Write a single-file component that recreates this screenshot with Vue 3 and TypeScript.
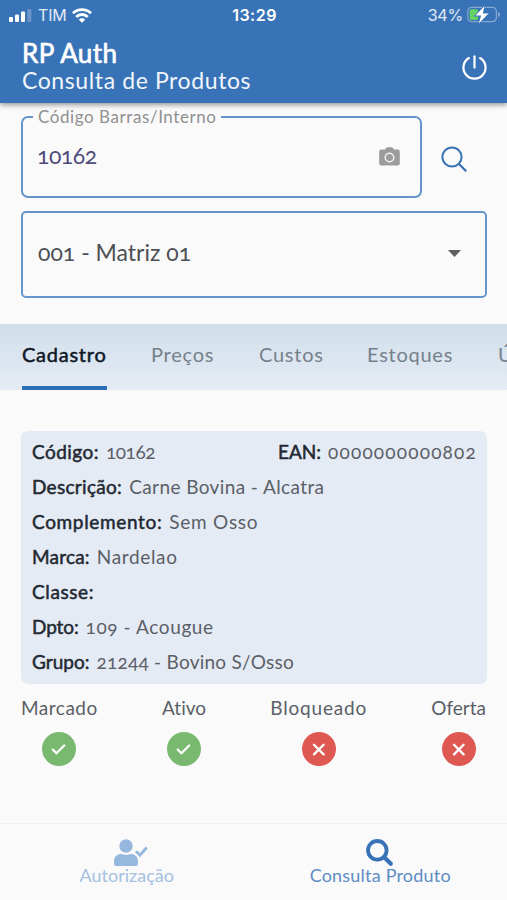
<script setup lang="ts">
interface Field {
  label: string
  value: string
  key: string
}

interface Flag {
  label: string
  key: string
  on: boolean
}

const tabs: { label: string; key: string }[] = [
  { label: 'Cadastro', key: 'cadastro' },
  { label: 'Preços', key: 'precos' },
  { label: 'Custos', key: 'custos' },
  { label: 'Estoques', key: 'estoques' },
  { label: 'Ú', key: 'ultimas' },
]
const activeTab = 'cadastro'

const fields: Field[] = [
  { label: 'Descrição:', value: 'Carne Bovina - Alcatra', key: 'descricao' },
  { label: 'Complemento:', value: 'Sem Osso', key: 'complemento' },
  { label: 'Marca:', value: 'Nardelao', key: 'marca' },
  { label: 'Classe:', value: '', key: 'classe' },
  { label: 'Dpto:', value: '109 - Acougue', key: 'dpto' },
  { label: 'Grupo:', value: '21244 - Bovino S/Osso', key: 'grupo' },
]

const flags: Flag[] = [
  { label: 'Marcado', key: 'marcado', on: true },
  { label: 'Ativo', key: 'ativo', on: true },
  { label: 'Bloqueado', key: 'bloqueado', on: false },
  { label: 'Oferta', key: 'oferta', on: false },
]
</script>

<template>
  <div class="screen">
    <header class="header">
      <div class="status">
        <div class="status-left">
          <svg class="signal" width="23" height="13" viewBox="0 0 23 13">
            <rect x="0" y="8" width="4" height="5" rx="1" fill="#fff" />
            <rect x="6" y="5.5" width="4" height="7.5" rx="1" fill="#fff" />
            <rect x="12" y="2.5" width="4" height="10.5" rx="1" fill="#fff" />
            <rect x="18.3" y="0" width="4" height="13" rx="1" fill="#fff" opacity=".25" />
          </svg>
          <span class="carrier">TIM</span>
          <svg width="20" height="15" viewBox="0 0 20 15" fill="none" stroke="#fff">
            <path d="M1 5.300a12.800 12.800 0 0 1 18 0" stroke-width="2.900" />
            <path d="M4.200 8.900a8.200 8.200 0 0 1 11.600 0" stroke-width="2.800" />
            <path d="M10 14.800 6.800 11.700a4.500 4.500 0 0 1 6.400 0z" fill="#fff" stroke="none" />
          </svg>
        </div>
        <span class="clock">13:29</span>
        <div class="status-right">
          <span class="percent">34%</span>
          <svg width="33" height="18" viewBox="0 0 33 18">
            <rect x=".8" y="1.300" width="28.600" height="14.400" rx="4" fill="none" stroke="#fff" stroke-opacity=".38" stroke-width="1.200" />
            <path d="M31 6v5.200c1.300-.5 2-1.400 2-2.600S32.300 6.500 31 6z" fill="#fff" opacity=".4" />
            <rect x="2.700" y="3.200" width="8.500" height="10.800" rx="2" fill="#65d464" />
            <path d="M17.500 0 8.500 9.600h5.600L11.800 17.500 21.500 7.400h-5.700z" fill="#fff" stroke="#3973b7" stroke-width="1.800" paint-order="stroke" />
          </svg>
        </div>
      </div>
      <div class="titlebar">
        <div class="titles">
          <h1>RP Auth</h1>
          <h2>Consulta de Produtos</h2>
        </div>
        <svg class="power" width="25" height="25" viewBox="0 0 26 26" fill="none" stroke="#fff" stroke-width="2.300" stroke-linecap="round">
          <path d="M7.200 3.200a11.500 11.500 0 1 0 11.600 0" />
          <path d="M13 1.300v11.800" />
        </svg>
      </div>
    </header>

    <section class="search">
      <div class="search-row">
        <fieldset class="code-field">
          <legend><span>Código Barras/Interno</span></legend>
          <div class="field-body">
            <span class="code">10162</span>
            <svg width="21" height="19" viewBox="0 0 21 19">
              <path d="M2.200 2.600h3.600L7.300.8Q7.700.3 8.400.3h4.200q.7 0 1.100.5l1.500 1.800h3.600q2 0 2 2v11.800q0 2-2 2H2.200q-2 0-2-2V4.600q0-2 2-2z" fill="#9c9c9c" />
              <circle cx="10.500" cy="10.500" r="4.300" fill="none" stroke="#f2f2f2" stroke-width="1.500" />
            </svg>
          </div>
        </fieldset>
        <svg class="lens" width="27" height="27" viewBox="0 0 27 27" fill="none" stroke="#3973b7" stroke-width="2">
          <circle cx="11" cy="11" r="9.600" />
          <path d="m17.800 17.800 7.400 7.400" stroke-width="2.300" />
        </svg>
      </div>
      <div class="select">
        <span>001 - Matriz 01</span>
        <svg width="13" height="7" viewBox="0 0 13 7"><path d="M0 0h13L6.500 7z" fill="#5f5f5f" /></svg>
      </div>
    </section>

    <nav class="tabs">
      <div v-for="tab in tabs" :key="tab.key" class="tab" :class="[tab.key, { active: tab.key === activeTab }]">
        <span>{{ tab.label }}</span>
      </div>
    </nav>

    <section class="card">
      <div class="row split">
        <div class="pair codigo"><b>Código:</b><span>10162</span></div>
        <div class="pair ean"><b>EAN:</b><span>0000000000802</span></div>
      </div>
      <div v-for="field in fields" :key="field.key" class="row pair" :class="field.key">
        <b>{{ field.label }}</b><span>{{ field.value }}</span>
      </div>
    </section>

    <section class="flags">
      <div v-for="flag in flags" :key="flag.key" class="flag" :class="flag.key">
        <span>{{ flag.label }}</span>
        <svg width="34" height="34" viewBox="0 0 34 34" fill="none" stroke="#fff" stroke-width="2.300" stroke-linecap="round">
          <circle cx="17" cy="17" r="17" stroke="none" :fill="flag.on ? '#78b96f' : '#df5953'" />
          <path v-if="flag.on" d="m10.800 17.600 3.600 3.600 7.800-7.700" />
          <path v-else d="m12 12.800 9.600 9.600m0-9.600L12 22.400" />
        </svg>
      </div>
    </section>

    <footer class="bottom">
      <div class="nav-item auth">
        <svg width="34" height="28" viewBox="0 0 34 28" fill="#96b8de">
          <circle cx="12" cy="7" r="6.700" />
          <path d="M0 24.500v-2.200c0-4.300 3-7.300 7-7.300 1.800 0 3 .9 5 .9s3.200-.9 5-.9c4 0 7 3 7 7.300v2.200q0 2.500-2.500 2.500h-19Q0 27 0 24.500z" />
          <path d="m22 12.200 4 4 6.700-7.700" fill="none" stroke="#96b8de" stroke-width="2.900" />
        </svg>
        <span>Autorização</span>
      </div>
      <div class="nav-item consulta">
        <svg width="28" height="28" viewBox="0 0 28 28" fill="none" stroke="#3973b7">
          <circle cx="11.300" cy="11.300" r="9.300" stroke-width="3.800" />
          <path d="m18.500 18.500 6.300 6.300" stroke-width="4.200" stroke-linecap="round" />
        </svg>
        <span>Consulta Produto</span>
      </div>
    </footer>
  </div>
</template>

<style>
body {
  margin: 0;
  background: #fafafa;
}
</style>

<style scoped>
* {
  box-sizing: border-box;
}

.screen {
  width: 507px;
  height: 900px;
  overflow: hidden;
  display: flex;
  flex-direction: column;
  background: #fafafa;
  color: #5b6067;
  font-family: Lato, "Open Sans", sans-serif;
  font-size: 19px;
  font-variant-numeric: oldstyle-nums;
  font-variant-ligatures: none;
  white-space: nowrap;
}

svg {
  display: block;
  flex: none;
  overflow: visible;
}

.header {
  flex: none;
  height: 103px;
  background: #3973b7;
  color: #fff;
  box-shadow: 0 2px 5px rgba(0, 0, 0, .4);
}

.status {
  height: 30px;
  padding: 0 7px 0 9px;
  display: grid;
  grid-template-columns: 1fr auto 1fr;
  align-items: center;
  font-family: Inter, sans-serif;
  font-variant-numeric: lining-nums;
  font-size: 16px;
}

.status-left,
.status-right {
  display: flex;
  align-items: center;
}

.carrier {
  margin: 0 6px;
  letter-spacing: -.2px;
  color: #e1eaf5;
}

.clock {
  font-weight: 600;
  letter-spacing: .5px;
}

.status-right {
  justify-content: flex-end;
  gap: 4px;
  color: #e1eaf5;
}

.percent {
  letter-spacing: -.2px;
}

.titlebar {
  height: 73px;
  padding: 0 20px 0 22px;
  display: flex;
  justify-content: space-between;
}

.titles {
  padding-top: 9px;
}

h1,
h2 {
  margin: 0;
  font-weight: 400;
  line-height: 28px;
}

h1 {
  font-size: 26px;
  letter-spacing: .4px;
  -webkit-text-stroke: .7px #fff;
}

h2 {
  margin-top: -1px;
  font-size: 23px;
  letter-spacing: .6px;
  color: #f0f5fb;
}

.power {
  margin-top: 25px;
}

.search {
  padding: 4px 20px 0 21px;
}

.search-row {
  display: flex;
  height: 91px;
}

.code-field {
  width: 401px;
  height: 91px;
  margin: 0;
  padding: 0 20px 0 14px;
  border: 2px solid #6595cb;
  border-radius: 7px;
}

.code-field legend {
  margin-left: -4px;
  padding: 0 5px;
  height: 20px;
  line-height: 20px;
  font-size: 17px;
  letter-spacing: .57px;
  color: #909090;
}

.field-body {
  height: 59px;
  display: flex;
  align-items: center;
  justify-content: space-between;
}

.code {
  margin-top: -3px;
  font-size: 23px;
  letter-spacing: -.5px;
  color: #4e4a7a;
}

.lens {
  margin: 39px 0 0 19px;
}

.select {
  margin-top: 13px;
  height: 87px;
  padding: 0 24px 2px 15px;
  border: 2px solid #6595cb;
  border-radius: 5px;
  display: flex;
  align-items: center;
  justify-content: space-between;
  font-size: 23px;
  color: #4c4f53;
}

.select span {
  margin-top: -3px;
}

.tabs {
  flex: none;
  margin-top: 26px;
  height: 66px;
  padding-left: 22px;
  display: flex;
  background: linear-gradient(#d0dfea, #e5ebf4);
  font-size: 20px;
  letter-spacing: .75px;
  color: #76808b;
}

.tab {
  flex: none;
  height: 66px;
  line-height: 61px;
}

.tab.cadastro {
  width: 129px;
  letter-spacing: .75px;
}

.tab.precos,
.tab.custos {
  width: 108px;
}

.tab.estoques {
  width: 131px;
}

.tab.active {
  color: #101827;
  -webkit-text-stroke: .5px #101827;
}

.tab.active span {
  display: block;
  width: 85px;
  height: 66px;
  border-bottom: 4px solid #2d6fb6;
}

.card {
  flex: none;
  margin: 41px 20px 0 21px;
  height: 253px;
  padding: 3px 11px 0;
  border-radius: 7px;
  background: #e5ebf4;
}

.row {
  height: 35px;
  line-height: 35px;
}

.split {
  display: flex;
  justify-content: space-between;
}

.pair b {
  display: inline-block;
  margin-right: 7px;
  font-weight: 400;
  color: #222832;
  -webkit-text-stroke: .5px #222832;
}

.codigo b {
  letter-spacing: .45px;
}

.descricao b {
  letter-spacing: .3px;
}

.codigo span {
  letter-spacing: -.4px;
}

.ean span {
  margin-right: -1px;
  letter-spacing: 1.200px;
}

.descricao span {
  letter-spacing: .4px;
}

.complemento b {
  letter-spacing: .65px;
}

.complemento span {
  letter-spacing: .75px;
}

.marca b {
  letter-spacing: .2px;
}

.marca span {
  letter-spacing: .65px;
}

.classe b {
  letter-spacing: .6px;
}

.dpto b {
  letter-spacing: -.1px;
}

.dpto span {
  letter-spacing: .6px;
}

.grupo span {
  letter-spacing: .25px;
}

.flags {
  flex: none;
  padding: 10px 21px 0;
  height: 139px;
  display: flex;
  justify-content: space-between;
}

.flag {
  display: flex;
  flex-direction: column;
  align-items: center;
  gap: 11px;
  line-height: 27px;
}

.marcado {
  letter-spacing: .5px;
}

.bloqueado {
  letter-spacing: .8px;
}

.bottom {
  flex: none;
  height: 77px;
  border-top: 1px solid #f1f1f1;
  display: grid;
  grid-template-columns: 1fr 1fr;
}

.nav-item {
  display: flex;
  flex-direction: column;
  align-items: center;
  padding-top: 15px;
  line-height: 20px;
  font-size: 18px;
}

.nav-item span {
  margin-top: -2px;
}

.auth {
  color: #a5c1df;
}

.auth svg {
  margin-left: 8px;
}

.consulta {
  letter-spacing: .2px;
  color: #5d8dc4;
}
</style>
